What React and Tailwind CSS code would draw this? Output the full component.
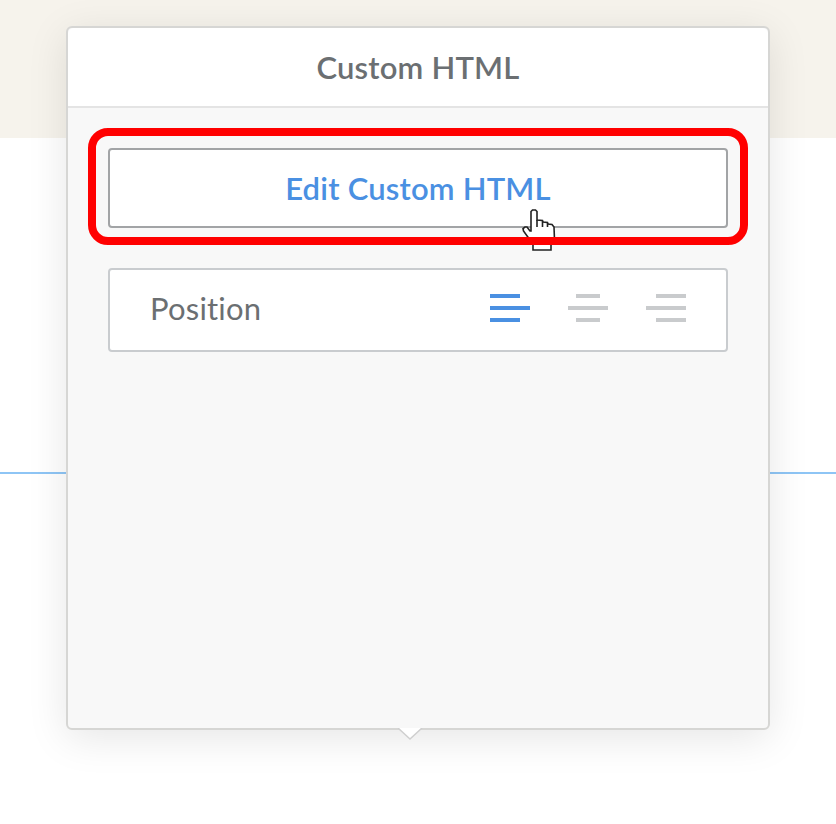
function AlignIcon({ color, rows }) {
  return (
    <svg width="40" height="28" viewBox="0 0 40 28" shapeRendering="crispEdges">
      {rows.map(([x, w], i) => (
        <rect key={i} x={x} y={i * 12} width={w} height="4" fill={color} />
      ))}
    </svg>
  )
}

function HandCursor() {
  return (
    <svg
      className="absolute left-[454px] top-[100px]"
      width="36"
      height="44"
      viewBox="0 0 36 44"
    >
      <path
        d="M9 3.5 L10.5 2 L13.5 2 L15 3.5 L15 12 L20.5 12.5 L21 14 L25.5 14.5 L26 16 L30 16.5 L32 19 L32.5 32 L29 37 L29 42 L11 42 L11 37 L8 32 L1.5 23 L1 20.5 L3 19 L5 19 L8 23 L9 23 Z"
        fill="#fff"
        stroke="#222"
        strokeWidth="1.6"
      />
      <path d="M15 12 L15 19 M20.5 13 L20.5 19 M25.5 15 L25.5 19" stroke="#222" strokeWidth="1.6" fill="none" />
    </svg>
  )
}

export default function App() {
  return (
    <div className="relative h-[824px] w-[836px] overflow-hidden bg-white font-['Lato','Open_Sans',sans-serif]">
      {/* Page behind the popover */}
      <div className="h-[138px] bg-[#f6f3ec]" />
      <div className="mt-[334px] h-[2px] bg-[#8ec5f5]" />

      {/* Popover */}
      <div className="absolute left-[66px] top-[26px] flex h-[704px] w-[704px] flex-col rounded-md border-2 border-[#d6d6d4] bg-[#f8f8f8] shadow-[0_8px_40px_rgba(0,0,0,0.1)]">
        <div className="flex h-[80px] shrink-0 items-center justify-center rounded-t-md border-b-2 border-[#e4e4e4] bg-white text-[31px] font-semibold tracking-[0.2px] text-[#6b6f72]">
          Custom HTML
        </div>

        <div className="relative px-[40px] pt-[40px]">
          <button className="flex h-[80px] w-full items-center justify-center rounded-[4px] border-2 border-[#a2a4a6] bg-white text-[31px] font-semibold tracking-[0.2px] text-[#4a90e2]">
            Edit Custom HTML
          </button>

          <div className="mt-[40px] flex h-[84px] items-center justify-between rounded-[4px] border-2 border-[#c9cccf] bg-white pl-[40px] pr-[40px]">
            <span className="mb-[4px] text-[31px] tracking-[0.2px] text-[#6b6f72]">Position</span>
            <div className="mb-[4px] flex items-center gap-[38px]">
              <AlignIcon color="#4a90e2" rows={[[0, 30], [0, 40], [0, 30]]} />
              <AlignIcon color="#c9cbcd" rows={[[8, 24], [0, 40], [8, 24]]} />
              <AlignIcon color="#c9cbcd" rows={[[10, 30], [0, 40], [10, 30]]} />
            </div>
          </div>

          <HandCursor />

          {/* Red annotation around the button */}
          <div className="pointer-events-none absolute left-[20px] top-[20px] h-[117px] w-[660px] rounded-[20px] border-[8px] border-[#ff0000]" />
        </div>

        {/* Arrow at the bottom edge */}
        <svg className="absolute left-[328px] top-[700px]" width="28" height="14" viewBox="0 0 28 14">
          <path d="M2 0 L14 11 L26 0 Z" fill="#fff" />
          <path d="M2 0 L14 11 L26 0" fill="none" stroke="#cfcfcf" strokeWidth="1.5" />
        </svg>
      </div>
    </div>
  )
}
